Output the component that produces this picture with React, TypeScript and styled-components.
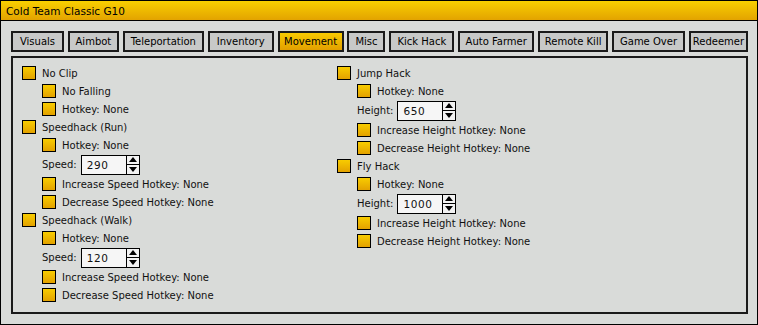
import React from "react";
import styled, { createGlobalStyle } from "styled-components";

const Global = createGlobalStyle`
  html, body { margin: 0; padding: 0; background: #d9dbd9; }
  body { font-family: "DejaVu Sans", Verdana, sans-serif; font-size: 10px; color: #111; }
`;

const Window = styled.div`
  width: 758px;
  height: 325px;
  box-sizing: border-box;
  border: 1px solid #000;
  background: #d9dbd9;
  display: flex;
  flex-direction: column;
`;

const TitleBar = styled.div`
  height: 20px;
  flex: none;
  box-sizing: border-box;
  border-bottom: 1px solid #000;
  background: linear-gradient(#f9d000, #e3a300);
  display: flex;
  align-items: center;
  padding-left: 5px;
  font-size: 10.5px;
  color: #000;
`;

const Body = styled.div`
  flex: 1;
  display: flex;
  flex-direction: column;
  padding: 10px 9px 10px 10px;
  gap: 4px;
  min-height: 0;
`;

const Tabs = styled.div`
  display: flex;
  justify-content: space-between;
  height: 21px;
  flex: none;
`;

const Tab = styled.div<{ $active?: boolean; $w: number }>`
  box-sizing: border-box;
  width: ${(p) => p.$w}px;
  height: 21px;
  border: 2px solid #1a1a1a;
  display: flex;
  align-items: center;
  justify-content: center;
  background: ${(p) => (p.$active ? "linear-gradient(#f8ca00, #e2a000)" : "#c8c9c8")};
  color: #000;
  white-space: nowrap;
`;

const Panel = styled.div`
  flex: 1;
  box-sizing: border-box;
  border: 2px solid #1a1a1a;
  padding: 6px 9px;
  display: grid;
  grid-template-columns: 315px 1fr;
  align-content: start;
`;

const Column = styled.div`
  display: flex;
  flex-direction: column;
`;

const Row = styled.div<{ $indent?: boolean }>`
  height: 18px;
  display: flex;
  align-items: center;
  gap: 6px;
  padding-left: ${(p) => (p.$indent ? "20px" : "0")};
  white-space: nowrap;
`;

const Box = styled.span`
  width: 14px;
  height: 14px;
  box-sizing: border-box;
  border: 1px solid #000;
  background: linear-gradient(#f8cc00, #e3a200);
  flex: none;
`;

const SpinRow = styled.div`
  height: 21px;
  display: flex;
  align-items: center;
  gap: 4px;
  padding-left: 20px;
`;

const Spinner = styled.div`
  display: flex;
  height: 20px;
  box-sizing: border-box;
  border: 1px solid #000;
  background: #f6f6f6;
`;

const SpinValue = styled.div`
  width: 45px;
  padding-left: 5px;
  box-sizing: border-box;
  display: flex;
  align-items: center;
  font-size: 10.5px;
  letter-spacing: 0.6px;
  border-right: 1px solid #000;
`;

const SpinButtons = styled.div`
  width: 12px;
  display: flex;
  flex-direction: column;
  background: #f2f2f2;
`;

const SpinBtn = styled.div<{ $top?: boolean }>`
  flex: 1;
  display: flex;
  align-items: center;
  justify-content: center;
  border-bottom: ${(p) => (p.$top ? "1px solid #000" : "none")};
`;

const Arrow = ({ up }: { up?: boolean }) => (
  <svg width="8" height="5" viewBox="0 0 8 5">
    <polygon points={up ? "0,5 8,5 4,0" : "0,0 8,0 4,5"} fill="#000" />
  </svg>
);

const Check = ({ label, indent }: { label: string; indent?: boolean }) => (
  <Row $indent={indent}>
    <Box />
    <span>{label}</span>
  </Row>
);

const Spin = ({ label, value }: { label: string; value: string }) => (
  <SpinRow>
    <span>{label}</span>
    <Spinner>
      <SpinValue>{value}</SpinValue>
      <SpinButtons>
        <SpinBtn $top>
          <Arrow up />
        </SpinBtn>
        <SpinBtn>
          <Arrow />
        </SpinBtn>
      </SpinButtons>
    </Spinner>
  </SpinRow>
);

const tabs: [string, number][] = [
  ["Visuals", 53],
  ["Aimbot", 51],
  ["Teleportation", 81],
  ["Inventory", 66],
  ["Movement", 66],
  ["Misc", 38],
  ["Kick Hack", 65],
  ["Auto Farmer", 76],
  ["Remote Kill", 70],
  ["Game Over", 73],
  ["Redeemer", 59],
];

export default function App() {
  return (
    <>
      <Global />
      <Window>
        <TitleBar>Cold Team Classic G10</TitleBar>
        <Body>
          <Tabs>
            {tabs.map(([t, w]) => (
              <Tab key={t} $w={w} $active={t === "Movement"}>
                {t}
              </Tab>
            ))}
          </Tabs>
          <Panel>
            <Column>
              <Check label="No Clip" />
              <Check label="No Falling" indent />
              <Check label="Hotkey: None" indent />
              <Check label="Speedhack (Run)" />
              <Check label="Hotkey: None" indent />
              <Spin label="Speed:" value="290" />
              <Check label="Increase Speed Hotkey: None" indent />
              <Check label="Decrease Speed Hotkey: None" indent />
              <Check label="Speedhack (Walk)" />
              <Check label="Hotkey: None" indent />
              <Spin label="Speed:" value="120" />
              <Check label="Increase Speed Hotkey: None" indent />
              <Check label="Decrease Speed Hotkey: None" indent />
            </Column>
            <Column>
              <Check label="Jump Hack" />
              <Check label="Hotkey: None" indent />
              <Spin label="Height:" value="650" />
              <Check label="Increase Height Hotkey: None" indent />
              <Check label="Decrease Height Hotkey: None" indent />
              <Check label="Fly Hack" />
              <Check label="Hotkey: None" indent />
              <Spin label="Height:" value="1000" />
              <Check label="Increase Height Hotkey: None" indent />
              <Check label="Decrease Height Hotkey: None" indent />
            </Column>
          </Panel>
        </Body>
      </Window>
    </>
  );
}
